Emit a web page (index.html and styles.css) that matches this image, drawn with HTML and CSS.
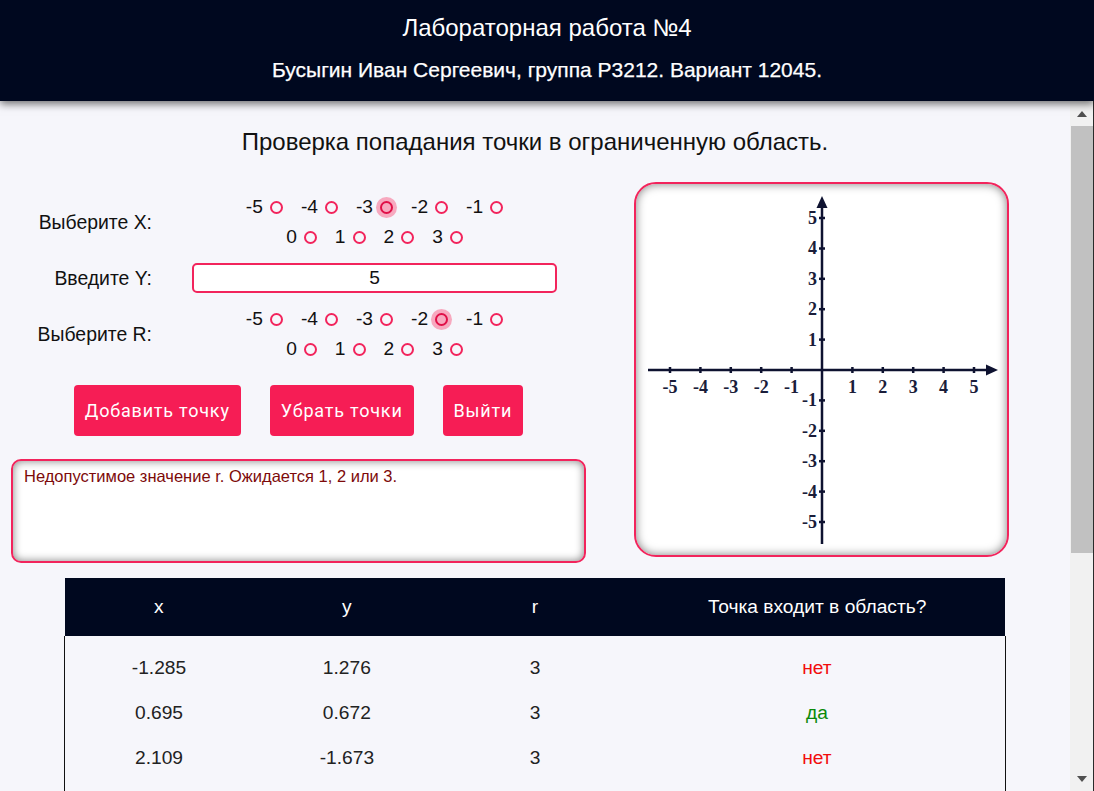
FILE: index.html
```html
<!DOCTYPE html>
<html lang="ru">
<head>
<meta charset="utf-8">
<title>Лабораторная работа №4</title>
<link rel="stylesheet" href="styles.css">
</head>
<body>
<header class="header">
  <h1 class="header-title">Лабораторная работа №4</h1>
  <p class="header-subtitle">Бусыгин Иван Сергеевич, группа P3212. Вариант 12045.</p>
</header>
<div class="workspace">
<main class="main">
  <h2 class="page-title">Проверка попадания точки в ограниченную область.</h2>
  <div class="content">
    <div class="left">
      <form class="form">
        <div class="label">Выберите X:</div>
        <div class="radios">
          <div class="radio-row">
            <label class="opt">-5<input type="radio" name="x" value="-5"></label>
            <label class="opt">-4<input type="radio" name="x" value="-4"></label>
            <label class="opt">-3<input type="radio" name="x" value="-3" checked></label>
            <label class="opt">-2<input type="radio" name="x" value="-2"></label>
            <label class="opt">-1<input type="radio" name="x" value="-1"></label>
          </div>
          <div class="radio-row">
            <label class="opt">0<input type="radio" name="x" value="0"></label>
            <label class="opt">1<input type="radio" name="x" value="1"></label>
            <label class="opt">2<input type="radio" name="x" value="2"></label>
            <label class="opt">3<input type="radio" name="x" value="3"></label>
          </div>
        </div>

        <div class="label">Введите Y:</div>
        <input class="text-input" type="text" name="y" value="5">

        <div class="label">Выберите R:</div>
        <div class="radios">
          <div class="radio-row">
            <label class="opt">-5<input type="radio" name="r" value="-5"></label>
            <label class="opt">-4<input type="radio" name="r" value="-4"></label>
            <label class="opt">-3<input type="radio" name="r" value="-3"></label>
            <label class="opt">-2<input type="radio" name="r" value="-2" checked></label>
            <label class="opt">-1<input type="radio" name="r" value="-1"></label>
          </div>
          <div class="radio-row">
            <label class="opt">0<input type="radio" name="r" value="0"></label>
            <label class="opt">1<input type="radio" name="r" value="1"></label>
            <label class="opt">2<input type="radio" name="r" value="2"></label>
            <label class="opt">3<input type="radio" name="r" value="3"></label>
          </div>
        </div>
      </form>
      <div class="buttons">
        <button class="btn" type="button">Добавить точку</button>
        <button class="btn" type="button">Убрать точки</button>
        <button class="btn" type="button">Выйти</button>
      </div>
      <div class="message">Недопустимое значение r. Ожидается 1, 2 или 3.</div>
    </div>
    <div class="graph">
      <svg class="graph-svg" width="371" height="371" viewBox="0 0 371 371">
        <g stroke="#0e1230" stroke-width="2.5" fill="none">
          <line x1="12" y1="186" x2="353" y2="186"/>
          <line x1="186" y1="360" x2="186" y2="22"/>
          <line x1="34" y1="183" x2="34" y2="189"/>
          <line x1="64.4" y1="183" x2="64.4" y2="189"/>
          <line x1="94.8" y1="183" x2="94.8" y2="189"/>
          <line x1="125.2" y1="183" x2="125.2" y2="189"/>
          <line x1="155.6" y1="183" x2="155.6" y2="189"/>
          <line x1="216.4" y1="183" x2="216.4" y2="189"/>
          <line x1="246.8" y1="183" x2="246.8" y2="189"/>
          <line x1="277.2" y1="183" x2="277.2" y2="189"/>
          <line x1="307.6" y1="183" x2="307.6" y2="189"/>
          <line x1="338" y1="183" x2="338" y2="189"/>
          <line x1="183" y1="34" x2="189" y2="34"/>
          <line x1="183" y1="64.4" x2="189" y2="64.4"/>
          <line x1="183" y1="94.8" x2="189" y2="94.8"/>
          <line x1="183" y1="125.2" x2="189" y2="125.2"/>
          <line x1="183" y1="155.6" x2="189" y2="155.6"/>
          <line x1="183" y1="216.4" x2="189" y2="216.4"/>
          <line x1="183" y1="246.8" x2="189" y2="246.8"/>
          <line x1="183" y1="277.2" x2="189" y2="277.2"/>
          <line x1="183" y1="307.6" x2="189" y2="307.6"/>
          <line x1="183" y1="338" x2="189" y2="338"/>
        </g>
        <g fill="#0e1230">
          <polygon points="362,186 350,180.5 350,191.5"/>
          <polygon points="186,12 180.5,24 191.5,24"/>
        </g>
        <g class="axis-label" text-anchor="middle">
          <text x="34" y="209">-5</text>
          <text x="64.4" y="209">-4</text>
          <text x="94.8" y="209">-3</text>
          <text x="125.2" y="209">-2</text>
          <text x="155.6" y="209">-1</text>
          <text x="216.4" y="209">1</text>
          <text x="246.8" y="209">2</text>
          <text x="277.2" y="209">3</text>
          <text x="307.6" y="209">4</text>
          <text x="338" y="209">5</text>
        </g>
        <g class="axis-label" text-anchor="end">
          <text x="181" y="40">5</text>
          <text x="181" y="70.4">4</text>
          <text x="181" y="100.8">3</text>
          <text x="181" y="131.2">2</text>
          <text x="181" y="161.6">1</text>
          <text x="181" y="222.4">-1</text>
          <text x="181" y="252.8">-2</text>
          <text x="181" y="283.2">-3</text>
          <text x="181" y="313.6">-4</text>
          <text x="181" y="344">-5</text>
        </g>
      </svg>
    </div>
  </div>

  <table class="results">
    <thead>
      <tr><th class="col-n">x</th><th class="col-n">y</th><th class="col-n">r</th><th>Точка входит в область?</th></tr>
    </thead>
    <tbody>
      <tr><td>-1.285</td><td>1.276</td><td>3</td><td class="no">нет</td></tr>
      <tr><td>0.695</td><td>0.672</td><td>3</td><td class="yes">да</td></tr>
      <tr><td>2.109</td><td>-1.673</td><td>3</td><td class="no">нет</td></tr>
      <tr class="spacer"><td colspan="4"></td></tr>
    </tbody>
  </table>
</main>
<div class="scrollbar" aria-hidden="true">
  <div class="sb-button"><span class="sb-arrow-up"></span></div>
  <div class="sb-track"><div class="sb-thumb"></div></div>
  <div class="sb-button"><span class="sb-arrow-down"></span></div>
</div>
</div>
</body>
</html>
```

FILE: styles.css
```css
* {
  box-sizing: border-box;
}

html,
body {
  margin: 0;
  height: 100%;
}

body {
  display: flex;
  flex-direction: column;
  height: 100vh;
  overflow: hidden;
  background: #f6f6fb;
  color: #111;
  font-family: "Liberation Sans", Arial, sans-serif;
}

.header {
  position: relative;
  z-index: 2;
  flex: none;
  height: 101px;
  padding-top: 14px;
  background: #00081f;
  color: #fff;
  text-align: center;
  box-shadow: 0 3px 8px rgba(0, 0, 0, 0.55);
}

.header-title {
  margin: 0;
  font-size: 24px;
  font-weight: normal;
  line-height: 28px;
}

.header-subtitle {
  margin: 16px 0 0;
  font-size: 21px;
  font-weight: normal;
  line-height: 24px;
  -webkit-text-stroke: 0.25px #fff;
}

.workspace {
  display: flex;
  flex: 1;
  min-height: 0;
  border-right: 1px solid #2b2b2b;
}

.main {
  flex: 1;
  min-width: 0;
  overflow-y: auto;
  scrollbar-width: none;
}

.main::-webkit-scrollbar {
  display: none;
}

.scrollbar {
  display: flex;
  flex: none;
  flex-direction: column;
  width: 23px;
  background: #f1f1f1;
}

.sb-button {
  display: flex;
  flex: none;
  align-items: center;
  justify-content: center;
  height: 21px;
  padding-left: 1px;
}

.sb-arrow-up {
  width: 0;
  height: 0;
  margin-top: 5px;
  border-left: 5px solid transparent;
  border-right: 5px solid transparent;
  border-bottom: 6px solid #505050;
}

.sb-arrow-down {
  width: 0;
  height: 0;
  margin-bottom: 4px;
  border-left: 5px solid transparent;
  border-right: 5px solid transparent;
  border-top: 6px solid #505050;
}

.sb-track {
  flex: 1;
  padding: 4px 0 0 1px;
}

.sb-thumb {
  height: 427px;
  background: #c1c1c1;
}

.page-title {
  margin: 27px 0 0;
  font-size: 24px;
  font-weight: normal;
  line-height: 28px;
  text-align: center;
}

.content {
  display: flex;
  align-items: flex-start;
  gap: 48px;
  margin-top: 26px;
  padding-left: 11px;
}

.left {
  flex: none;
  width: 575px;
  padding-top: 10px;
}

.form {
  display: grid;
  grid-template-columns: 141px 365px;
  column-gap: 40px;
  row-gap: 11px;
  align-items: center;
}

.label {
  font-size: 19.4px;
  text-align: right;
}

.radios {
  font-size: 19.2px;
  line-height: 30px;
}

.radio-row {
  display: flex;
  justify-content: center;
  column-gap: 18px;
}

.opt {
  display: inline-flex;
  align-items: center;
  gap: 7px;
}

.opt input {
  appearance: none;
  -webkit-appearance: none;
  width: 13px;
  height: 13px;
  margin: 0;
  border: 2px solid #f2245c;
  border-radius: 50%;
  background: transparent;
}

.opt input:checked {
  border-color: #e01048;
  background: #f7a9bf;
  box-shadow: 0 0 0 4px #f7a9bf;
}

.text-input {
  width: 365px;
  height: 30px;
  border: 2px solid #f2245c;
  border-radius: 5px;
  background: #fff;
  font-family: "Liberation Sans", Arial, sans-serif;
  font-size: 19.2px;
  text-align: center;
  color: #111;
}

.buttons {
  display: flex;
  justify-content: center;
  gap: 29px;
  margin-top: 21px;
}

.btn {
  height: 51px;
  padding: 0 11px;
  border: none;
  border-radius: 4px;
  background: #f61d55;
  color: #fff;
  font-family: Roboto, "Liberation Sans", sans-serif;
  font-size: 18px;
  font-weight: 400;
  letter-spacing: 0.8px;
}

.message {
  height: 104px;
  margin-top: 23px;
  padding: 6px 11px;
  border: 2px solid #f2245c;
  border-radius: 10px;
  background: #fff;
  box-shadow: inset 0 0 8px rgba(0, 0, 0, 0.5);
  color: #7d0a0a;
  font-size: 16.5px;
}

.graph {
  flex: none;
  width: 375px;
  height: 375px;
  border: 2px solid #f2245c;
  border-radius: 22px;
  background: #fff;
  box-shadow: inset 0 0 10px rgba(0, 0, 0, 0.5);
  overflow: hidden;
}

.graph-svg {
  display: block;
}

.axis-label {
  font-family: "Liberation Serif", "Times New Roman", serif;
  font-size: 18px;
  font-weight: bold;
  fill: #1a1d3a;
}

.results {
  width: 88%;
  margin: 15px auto 0;
  border-collapse: collapse;
  font-size: 19.2px;
  text-align: center;
}

.results th {
  height: 58px;
  padding: 0;
  background: #00081f;
  color: #fff;
  font-weight: normal;
}

.results .col-n {
  width: 20%;
}

.results td {
  padding: 12px 0;
  line-height: 21px;
  color: #222;
}

.results tbody tr:first-child td {
  padding-top: 21px;
}

.results td:first-child {
  border-left: 1px solid #111;
}

.results td:last-child {
  border-right: 1px solid #111;
}

.results .spacer td {
  height: 370px;
  padding: 0;
}

.results .no {
  color: #f20d0d;
}

.results .yes {
  color: #0a8a0a;
}
```
